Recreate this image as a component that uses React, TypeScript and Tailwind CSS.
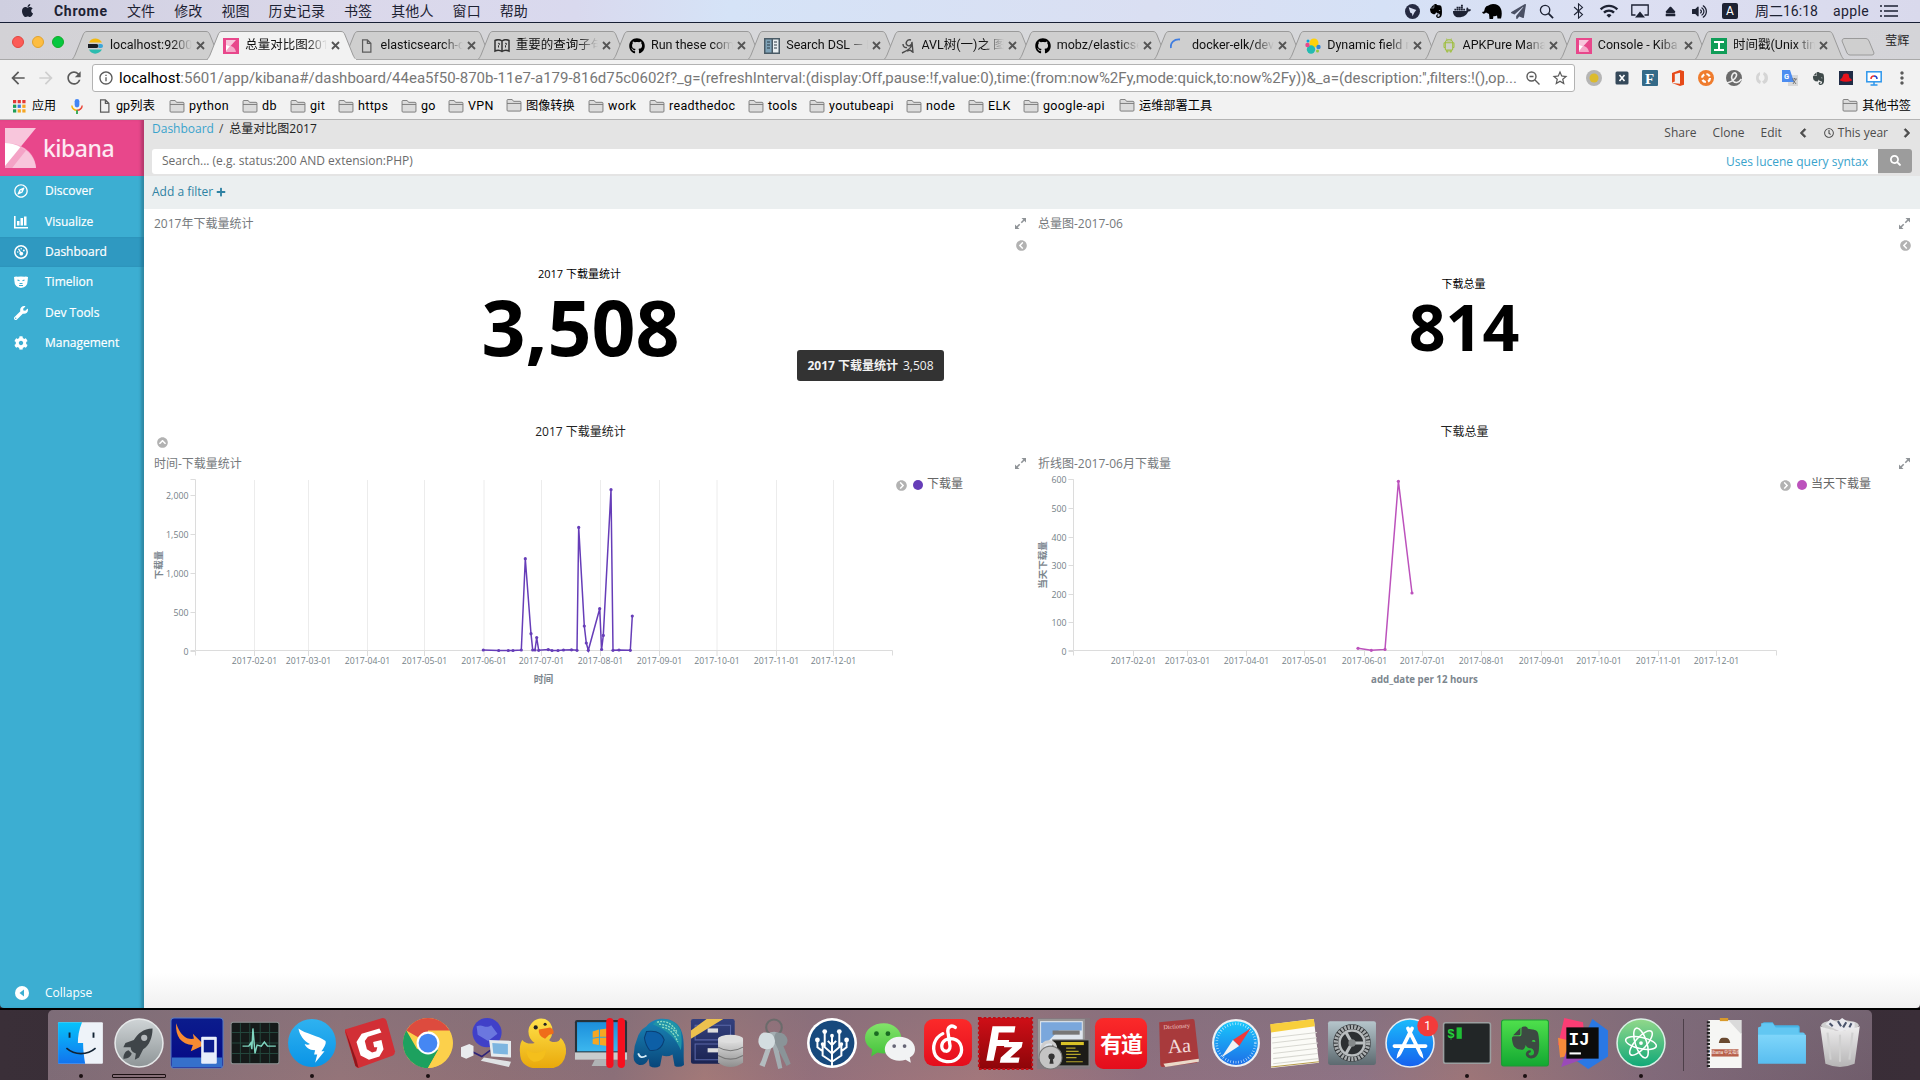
import React from "react";
import { FaApple, FaDocker, FaGithub, FaEvernote, FaPaperPlane, FaWrench, FaCog, FaPlus, FaSearch, FaChevronLeft, FaChevronRight, FaChevronCircleLeft, FaChevronCircleRight, FaChevronCircleUp, FaRegCompass, FaEject, FaVolumeUp, FaRegClock } from "react-icons/fa";
import { AiOutlineAndroid } from "react-icons/ai";
import { MdArrowBack, MdArrowForward, MdRefresh, MdStarBorder, MdInfoOutline, MdMoreVert, MdWifi } from "react-icons/md";

type Kids = { children?: React.ReactNode };

const MENUS = ["文件", "修改", "视图", "历史记录", "书签", "其他人", "窗口", "帮助"];

function MenuCell({ w, children }: Kids & { w: string }) {
  return <span className={`flex shrink-0 items-center justify-center ${w}`}>{children}</span>;
}

function MenuBar() {
  return (
    <div className="flex h-[23px] items-center border-b border-[#171f35] bg-[linear-gradient(90deg,#cfcfe0_0%,#dbd8ea_18%,#d9d9ee_30%,#d5e3f7_38%,#dadff2_60%,#d5e1f6_72%,#dcdff2_85%,#d9d9ec_100%)] font-[Roboto,'Noto_Sans_CJK_SC',sans-serif] text-[14px] leading-none text-[#1d2233]">
      <FaApple className="ml-[20px] -mt-[1px] size-[15px]" />
      <span className="ml-[19px] w-[73px] text-[14px] font-bold tracking-[0.7px]">Chrome</span>
      <div className="flex gap-[19px]">
        {MENUS.map((m) => <span key={m} className="whitespace-nowrap tracking-[0.1px]">{m}</span>)}
      </div>
      <div className="ml-auto flex items-center">
        <MenuCell w="w-[24px]">
          <svg viewBox="0 0 16 16" className="size-[15px]"><circle cx="8" cy="8" r="8" fill="#262b42" /><path d="M4 3.500l8 3-2 2.500-2 4-.5-3-2-1z" fill="#d9e0f3" /></svg>
        </MenuCell>
        <MenuCell w="w-[24px]"><FaEvernote className="size-[16px] text-black" /></MenuCell>
        <MenuCell w="w-[28px]"><FaDocker className="size-[18px]" /></MenuCell>
        <MenuCell w="w-[31px]">
          <svg viewBox="0 0 20 17" className="h-[17px] w-[20px]"><path d="M3 5q1-2.500 3.500-2.500Q8 1 11 1q6 0 8 5 1.500 4 0 9.500h-3.500l-.5-3q-2 1-3.500.5L11 16H7.500L7 11 4 9.500Q3 11 1 10.500L0 9l2-.5z" fill="#000" /></svg>
        </MenuCell>
        <MenuCell w="w-[22px]"><FaPaperPlane className="size-[15px] text-[#4a5064]" /></MenuCell>
        <MenuCell w="w-[34px]"><svg viewBox="0 0 16 16" className="size-[15px]" fill="none" stroke="#1d2233" strokeWidth="1.400"><circle cx="6.500" cy="6.500" r="5" /><path d="M10 10l5 5" strokeWidth="1.900" /></svg></MenuCell>
        <MenuCell w="w-[30px]"><svg viewBox="0 0 12 18" className="h-[16px] w-[11px]" fill="none" stroke="#1d2233" strokeWidth="1.200"><path d="M1 4.500l9.500 8.500L6 17V1l4.500 4L1 13.500" /></svg></MenuCell>
        <MenuCell w="w-[31px]"><MdWifi className="size-[20px]" /></MenuCell>
        <MenuCell w="w-[31px]"><svg viewBox="0 0 18 15" className="h-[15px] w-[18px]" stroke="#1d2233" strokeWidth="1.300"><path d="M4.500 11H.8V1h16.400v10h-3.700" fill="none" /><path d="M9 7.500l5 6H4z" fill="#1d2233" stroke="none" /></svg></MenuCell>
        <MenuCell w="w-[31px]"><FaEject className="size-[11px]" /></MenuCell>
        <MenuCell w="w-[26px]"><FaVolumeUp className="size-[15px]" /></MenuCell>
        <MenuCell w="w-[36px]"><span className="flex h-[16px] w-[16px] items-center justify-center rounded-[2px] bg-[#1d2233] text-[12px] text-white">A</span></MenuCell>
        <span className="ml-[7px] w-[78px] whitespace-nowrap">周二16:18</span>
        <span className="w-[47px] tracking-[0.4px]">apple</span>
        <svg viewBox="0 0 18 14" className="mr-[22px] h-[14px] w-[18px]" stroke="#1d2233" strokeWidth="1.700"><path d="M0 2h2M4 2h14M0 7h2M4 7h14M0 12h2M4 12h14" /></svg>
      </div>
    </div>
  );
}

const KibanaFav = () => (
  <svg viewBox="0 0 16 16" className="size-[16px]"><rect width="16" height="16" fill="#e8478b" /><path d="M3 2h10L3 13z" fill="#f8c6dc" /><path d="M3 7c5 0 9 2 10 7H3z" fill="#f4a9c9" /><path d="M3 7l4 1-4 5z" fill="#fff" /></svg>
);
const DocFav = () => <svg viewBox="0 0 12 16" className="h-[14px] w-[11px]" fill="none" stroke="#5c5c5c" strokeWidth="1.400"><path d="M1.500 1h5.500l4 4v10h-9.500zM7 1v4h4" /></svg>;

const TABS: { title: string; icon: React.ReactNode }[] = [
  { title: "localhost:9200", icon: <svg viewBox="0 0 16 16" className="size-[16px]"><path d="M1 4.500C3-.5 11-1 14 4.500z" fill="#f2b90f" /><path d="M0 6h8.500a2 2 0 010 4H0z" fill="#1b1f24" /><path d="M10.500 6H13a1 1 0 010 4h-2.500z" fill="#3ba6d8" /><path d="M1 11.500C3 17 11 17 14 11.500z" fill="#2bbcaf" /></svg> },
  { title: "总量对比图2017", icon: <KibanaFav /> },
  { title: "elasticsearch-d", icon: <DocFav /> },
  { title: "重要的查询子句", icon: <svg viewBox="0 0 16 14" className="h-[14px] w-[16px]" fill="none" stroke="#333" strokeWidth="1.500"><path d="M8 12.500C6 11 3 11 1 12V1.500c2-1 5-1 7 .5 2-1.500 5-1.500 7-.5V12c-2-1-5-1-7 .5zM8 2v10" /><path d="M4 4.500c2-1 2 1 .5 2v2M11 4.500c2-1 2 1 .5 2v2" strokeWidth="1" /></svg> },
  { title: "Run these com", icon: <FaGithub className="size-[16px] text-black" /> },
  { title: "Search DSL — E", icon: <svg viewBox="0 0 16 16" className="size-[16px]"><rect width="16" height="16" fill="#4a5b66" /><rect x="1.500" y="1.500" width="6" height="13" fill="#7fa3b8" /><rect x="9" y="1.500" width="5.500" height="13" fill="#e8eef0" /><path d="M3 4h3M3 7h3M3 10h3M10 4h3M10 7h3M10 10h3" stroke="#2c3a44" /></svg> },
  { title: "AVL树(一)之 图", icon: <svg viewBox="0 0 16 16" className="size-[16px]" fill="none" stroke="#4b4b4b" strokeWidth="1.400"><path d="M3 6c0 3 2 4 4 3.500M11 2C7 1 5 5 7 7s5 0 5-3c1 4-3 8-10 11M12 4l1 11M7 13q4-2 5 1" /></svg> },
  { title: "mobz/elasticse", icon: <FaGithub className="size-[16px] text-black" /> },
  { title: "docker-elk/dev", icon: <svg viewBox="0 0 16 16" className="size-[16px]" fill="none" stroke="#3f7de0" strokeWidth="1.800"><path d="M1 10C0 5 4 1 10 1.500" /></svg> },
  { title: "Dynamic field m", icon: <svg viewBox="0 0 16 16" className="size-[16px]"><circle cx="9" cy="5" r="4.500" fill="#fed10a" /><circle cx="6" cy="11.500" r="4.200" fill="#24bbb1" /><circle cx="2.500" cy="7" r="2.200" fill="#e8478b" /><circle cx="13.500" cy="9" r="2.200" fill="#3185d6" /><circle cx="3" cy="3" r="1.500" fill="#07a5de" /><circle cx="12.500" cy="13" r="1.500" fill="#93c83e" /></svg> },
  { title: "APKPure Mana", icon: <AiOutlineAndroid className="size-[17px] text-[#9fbf3f]" /> },
  { title: "Console - Kiba", icon: <KibanaFav /> },
  { title: "时间戳(Unix tim", icon: <svg viewBox="0 0 16 16" className="size-[16px]"><rect width="16" height="16" fill="#0f9d58" /><path d="M3 4h10M3 12h10M8 4v8" stroke="#fff" strokeWidth="2" /></svg> },
];

function Tab({ title, icon, active }: { title: string; icon: React.ReactNode; active: boolean }) {
  return (
    <div className={active ? "relative z-10 h-[29px] w-[135.25px] shrink-0" : "relative h-[29px] w-[135.25px] shrink-0"}>
      <svg viewBox="0 0 150 29" className="absolute top-0 left-0 h-[29px] w-[150px]">
        <path d="M0 28.500C1 28 2 26 3 24L11 4C12 1.500 13 .5 15 .5H134C136 .5 137 1.500 138 4L146 24C147 26 148 28 149 28.500" fill={active ? "#f2f2f2" : "#cfcfcf"} stroke="#9a9a9a" />
        {active ? <path d="M1 28.500H149" stroke="#f2f2f2" strokeWidth="1.500" /> : <path d="M0 28.500H150" stroke="#a9a9a9" />}
      </svg>
      <div className="relative flex h-[29px] items-center pl-[16px]">
        <span className="flex w-[16px] justify-center">{icon}</span>
        <span className="ml-[6px] w-[82px] overflow-hidden text-[12.500px] whitespace-nowrap text-[#111] [mask-image:linear-gradient(90deg,#000_75%,transparent_100%)]">{title}</span>
        <svg viewBox="0 0 9 9" className="ml-[4px] size-[9px]" stroke="#555" strokeWidth="1.800"><path d="M1 1l7 7M8 1L1 8" /></svg>
      </div>
    </div>
  );
}

function TabStrip() {
  return (
    <div className="flex h-[37px] items-end bg-[linear-gradient(90deg,#d3d2d6,#d8d9dc_50%,#d4d4d8)] shadow-[inset_0_-1px_0_#a9a9a9]">
      <div className="flex w-[72px] shrink-0 gap-[8px] self-center pl-[12px]">
        <i className="size-[12px] rounded-full border border-[#e2463f] bg-[#fc5b57]" />
        <i className="size-[12px] rounded-full border border-[#e1a32c] bg-[#fdbd41]" />
        <i className="size-[12px] rounded-full border border-[#12ac28] bg-[#05c73f]" />
      </div>
      {TABS.map((t, i) => <Tab key={i} title={t.title} icon={t.icon} active={i === 1} />)}
      <svg viewBox="0 0 34 18" className="mb-[4px] ml-[11px] h-[18px] w-[34px] shrink-0"><path d="M3 .5H25Q27 .5 28 3L33 15Q33 17 31 17H9Q7 17 6 15L1 3Q1 1 3 .5z" fill="#cfcfcf" stroke="#9a9a9a" /></svg>
      <span className="mb-[1px] ml-[10px] self-center text-[12px] whitespace-nowrap text-[#222]">莹辉</span>
    </div>
  );
}

const EXT: React.ReactNode[] = [
  <svg viewBox="0 0 16 16"><circle cx="8" cy="8" r="8" fill="#b5b5b5" /><circle cx="8" cy="8" r="4.500" fill="#dcbb2d" /></svg>,
  <svg viewBox="0 0 16 16"><rect x="1.500" y="1.500" width="13" height="13" rx="1.500" fill="#35495a" /><path d="M5.500 5l5 6M10.500 5l-5 6" stroke="#fff" strokeWidth="1.600" /></svg>,
  <svg viewBox="0 0 16 16"><rect width="16" height="16" rx="1" fill="#346a88" /><text x="3" y="13.500" fontSize="15" fontWeight="700" fontFamily="Liberation Serif, serif" fill="#fff">F</text></svg>,
  <svg viewBox="0 0 16 16"><path d="M2 3l8-3 4 1.200v13.600L10 16l-8-3 8 .8V2.800L4.800 4v7.500L2 12.800z" fill="#e64a19" /></svg>,
  <svg viewBox="0 0 16 16"><circle cx="8" cy="8" r="8" fill="#ef7c2e" /><circle cx="8" cy="8" r="4" fill="none" stroke="#fff" strokeWidth="2.200" strokeDasharray="4 2.280" /></svg>,
  <svg viewBox="0 0 16 16"><circle cx="8" cy="8" r="8" fill="#6b6b6b" /><path d="M1 13C8 11 12 6 10 3.500S4 6 6.500 10s6 3 9-1" fill="none" stroke="#eee" strokeWidth="1.600" /></svg>,
  <svg viewBox="0 0 16 16"><path d="M6 2a6.500 6.500 0 000 12l1-3a3.500 3.500 0 01-1-6zM10 2a6.500 6.500 0 010 12l-2-2.500a4 4 0 001-7z" fill="#d5d5d5" /></svg>,
  <svg viewBox="0 0 16 16"><rect x="6" y="5" width="10" height="11" fill="#d9d9d9" /><path d="M0 0h8l4 12H0z" fill="#4d8df0" /><text x="2" y="8.500" fontSize="7.500" fontWeight="700" fontFamily="Roboto, sans-serif" fill="#fff">G</text><path d="M10 9h5M12.500 8v1M11 14l3-5M11 10l3 4" stroke="#666" strokeWidth=".8" /></svg>,
  <FaEvernote className="size-[15px] text-[#3f4a4a]" />,
  <svg viewBox="0 0 16 16"><rect x="1" y="1" width="14" height="14" fill="#202c46" /><path d="M2 10.500q0-2 2-2.500l1.500-4q3-1 5 0l1 4q2.500.5 2.500 2.500-6 2.500-12 0z" fill="#e8121b" /></svg>,
  <svg viewBox="0 0 16 16"><rect x=".8" y="1.800" width="14.400" height="10" fill="#fff" stroke="#2f97ec" strokeWidth="1.500" /><path d="M8 12v2.500M4.500 15h7" stroke="#2f97ec" strokeWidth="1.500" /><path d="M5 9a3 3 0 013-3" stroke="#e33" strokeWidth="1.500" fill="none" /><path d="M8 6a3 3 0 013 3" stroke="#24c" strokeWidth="1.500" fill="none" /></svg>,
  <MdMoreVert className="size-[20px] text-[#5a5a5a]" />,
];

function Toolbar() {
  return (
    <div className="flex h-[36px] items-center bg-[#f2f2f2] text-[#5a5a5a]">
      <MdArrowBack className="ml-[8px] size-[20px]" />
      <MdArrowForward className="ml-[8px] size-[20px] text-[#cfcfcf]" />
      <MdRefresh className="mr-[8px] ml-[8px] size-[20px]" />
      <div className="flex h-[28px] w-[1483px] shrink-0 items-center rounded-[3px] border border-[#b3b3b3] bg-white pl-[5px]">
        <MdInfoOutline className="size-[16px]" />
        <span className="ml-[5px] w-[1407px] text-[15px] whitespace-nowrap text-[#777]"><span className="text-black">localhost</span>:5601/app/kibana#/dashboard/44ea5f50-870b-11e7-a179-816d75c0602f?_g=(refreshInterval:(display:Off,pause:!f,value:0),time:(from:now%2Fy,mode:quick,to:now%2Fy))&amp;_a=(description:'',filters:!(),op...</span>
        <svg viewBox="0 0 14 14" className="size-[14px]" fill="none" stroke="#5a5a5a" strokeWidth="1.400"><circle cx="5.500" cy="5.500" r="4.500" /><path d="M3.500 5.500h4M9 9l4.500 4.500" /></svg>
        <MdStarBorder className="ml-[11px] size-[18px]" />
      </div>
      <div className="ml-[5px] flex">
        {EXT.map((e, i) => <span key={i} className="flex w-[28px] items-center justify-center [&>svg:not([stroke])]:size-[16px]">{e}</span>)}
      </div>
    </div>
  );
}

const Folder = () => (
  <svg viewBox="0 0 16 14" className="h-[13px] w-[16px] shrink-0" stroke="#787878"><path d="M.5 12V1.500q0-1 1-1h4.500l1.500 2h7q1 0 1 1V12q0 1-1 1h-13q-1 0-1-1z" fill="#dcdcdc" /><path d="M.5 4.800h15" /></svg>
);

const MARKS: [string, string][] = [
  ["python", "w-[73px]"], ["db", "w-[48px]"], ["git", "w-[48px]"], ["https", "w-[63px]"], ["go", "w-[47px]"], ["VPN", "w-[58px]"], ["图像转换", "w-[82px]"], ["work", "w-[61px]"], ["readthedoc", "w-[99px]"], ["tools", "w-[61px]"], ["youtubeapi", "w-[97px]"], ["node", "w-[62px]"], ["ELK", "w-[55px]"], ["google-api", "w-[96px]"], ["运维部署工具", "w-[96px]"],
];

function Bookmarks() {
  const colors = ["#e53935", "#e53935", "#e53935", "#1e9e57", "#3b7de0", "#f6a623", "#1e9e57", "#f6a623", "#f6a623"];
  return (
    <div className="flex h-[24px] items-center border-b border-[#b4b4b4] bg-[#f2f2f2] pb-[3px] text-[12.500px] text-black">
      <svg viewBox="0 0 14 14" className="ml-[13px] size-[13px]">{colors.map((c, i) => <rect key={i} x={(i % 3) * 5} y={Math.floor(i / 3) * 5} width="3.500" height="3.500" fill={c} />)}</svg>
      <span className="ml-[6px] w-[38px] text-[12px] whitespace-nowrap">应用</span>
      <svg viewBox="0 0 14 16" className="h-[15px] w-[14px]"><rect x="4.500" y="0" width="5" height="9" rx="2.500" fill="#4285f4" /><path d="M1.500 7a5.500 5 0 005.500 5" fill="none" stroke="#f4b400" strokeWidth="1.500" /><path d="M12.500 7a5.500 5 0 01-5.500 5" fill="none" stroke="#ea4335" strokeWidth="1.500" /><path d="M7 12v4" stroke="#34a853" strokeWidth="2" /></svg>
      <span className="ml-[15px] flex w-[70px] items-center gap-[6px] whitespace-nowrap"><DocFav />gp列表</span>
      {MARKS.map(([t, w]) => <span key={t} className={`flex shrink-0 items-center gap-[4px] whitespace-nowrap ${t.charCodeAt(0) < 128 ? "tracking-[0.35px]" : "text-[12.200px]"} ${w}`}><Folder />{t}</span>)}
      <span className="mr-[9px] ml-auto flex items-center gap-[4px] text-[12.200px] whitespace-nowrap"><Folder />其他书签</span>
    </div>
  );
}

const NAV: { label: string; icon: React.ReactNode }[] = [
  { label: "Discover", icon: <FaRegCompass className="size-[14px]" /> },
  { label: "Visualize", icon: <svg viewBox="0 0 14 14" className="size-[14px]" fill="#fff"><path d="M0 1h1.600v11H14v1.500H0zM3 6h2.500v4.500H3zM6.500 3H9v7.500H6.500zM10 1.500h2.500v9H10z" /></svg> },
  { label: "Dashboard", icon: <svg viewBox="0 0 14 14" className="size-[14px]" fill="none" stroke="#fff"><circle cx="7" cy="7" r="6.200" strokeWidth="1.500" /><path d="M4.500 3.800L7.500 9" strokeWidth="1.300" /><circle cx="7.300" cy="8.600" r="1.900" fill="#fff" stroke="none" /><circle cx="3.800" cy="7" r=".8" fill="#fff" stroke="none" /><circle cx="7.200" cy="3.800" r=".8" fill="#fff" stroke="none" /><circle cx="9.800" cy="5.500" r="1" fill="#fff" stroke="none" /></svg> },
  { label: "Timelion", icon: <svg viewBox="0 0 14 12" className="h-[12px] w-[14px]"><path d="M0 1q2-1 3.500-.2 3.500-.8 7 0Q12 0 14 1l-.4 4q0 6-6.600 7Q.4 11 .4 5z" fill="#fff" /><path d="M3.500 4l2 .8M10.500 4l-2 .8M5.500 7.500h3M5 9.500h4" stroke="#3caed2" strokeWidth="1.100" /></svg> },
  { label: "Dev Tools", icon: <FaWrench className="size-[14px]" /> },
  { label: "Management", icon: <FaCog className="size-[14px]" /> },
];

function Sidebar() {
  return (
    <div className="flex w-[144px] shrink-0 flex-col rounded-bl-[4px] bg-[#3caed2] text-[12px] text-white shadow-[inset_-4px_0_3px_-1px_rgba(0,0,0,.22)]">
      <div className="flex h-[56px] items-center bg-[#e8478b] pl-[5px] shadow-[inset_-4px_0_3px_-1px_rgba(0,0,0,.22)]">
        <svg viewBox="0 0 31 40" className="h-[40px] w-[31px]"><path d="M0 0h31L0 38z" fill="#f8c6dc" /><path d="M0 15c18 0 30 10 31 25H0z" fill="#f4a3c6" /><path d="M15.500 19C25 23 30 31 31 40H7L19 22z" fill="#f8c6dc" /><path d="M7 40L21 22.500 15 19 0 36v4z" fill="#f4a3c6" /><path d="M0 15q8 0 15.500 4L0 38z" fill="#fff" /></svg>
        <span className="mt-[-1px] ml-[7px] font-['Noto_Sans',sans-serif] text-[23px] leading-[40px] font-medium tracking-[-0.5px] text-[#fde9f2]">kibana</span>
      </div>
      {NAV.map((n) => (
        <div key={n.label} className={`flex h-[30.400px] items-center pl-[14px] ${n.label === "Dashboard" ? "bg-[#2f99c1] shadow-[inset_-4px_0_3px_-1px_rgba(0,0,0,.18)]" : ""}`}>
          <span className="w-[31px]">{n.icon}</span><span className="font-medium [-webkit-text-stroke:0.2px_#fff]">{n.label}</span>
        </div>
      ))}
      <div className="mt-auto flex h-[30px] items-center pl-[15px]">
        <svg viewBox="0 0 14 14" className="size-[14px]"><circle cx="7" cy="7" r="7" fill="#fff" /><path d="M9 3.500v7L4.500 7z" fill="#3caed2" /></svg>
        <span className="ml-[16px] font-medium">Collapse</span>
      </div>
    </div>
  );
}

function Panel({ title, className, children }: Kids & { title: string; className: string }) {
  return (
    <div className={`relative w-[884px] shrink-0 ${className}`}>
      <div className="flex h-[29px] items-center pr-[2px] pl-[10px]">
        <span className="text-[12px] text-[#75797c]">{title}</span>
        <svg viewBox="0 0 11 11" className="ml-auto size-[11px]" fill="#8f9397" stroke="#8f9397"><path d="M6.500 0H11v4.500zM0 6.500V11h4.500z" stroke="none" /><path d="M9 2L6.300 4.700M4.700 6.300L2 9" strokeWidth="1.600" /></svg>
      </div>
      {children}
    </div>
  );
}

function Metric({ label, value, big }: { label: string; value: string; big: boolean }) {
  return (
    <>
      <div className="flex h-[14px] items-center justify-end pr-[1px]"><FaChevronCircleLeft className="size-[11px] text-[#b2b2b2]" /></div>
      <div className="flex h-[171px] flex-col items-center pr-[13px] text-black">
        <span className={big ? "mt-[14px] text-[11px] leading-[16px]" : "mt-[24px] text-[11px] leading-[16px]"}>{label}</span>
        <span className={big ? "mt-[5px] pl-[2px] text-[77px] leading-[80px] font-bold" : "mt-[2px] pl-[1px] text-[64.500px] leading-[64px] font-bold"}>{value}</span>
      </div>
      <div className="pr-[11px] text-center text-[12px] leading-[18px] text-[#222]">{label}</div>
    </>
  );
}

const MONTHS = ["02", "03", "04", "05", "06", "07", "08", "09", "10", "11", "12"];

type ChartProps = {
  view: string; x0: number; x1: number; months: number[]; ticks: [string, number][]; grid: boolean;
  color: string; points: [number, number][]; yTitle: string; yTitleX: number; xTitle: string;
};

function LineChart(p: ChartProps) {
  const mid = (p.x0 + p.x1) / 2;
  return (
    <svg viewBox={p.view} className="h-[220px] w-[752px] shrink-0 overflow-visible" fontFamily="'Open Sans','Noto Sans CJK SC',sans-serif">
      {p.grid && p.months.map((x) => <path key={x} d={`M${x} 480V650`} stroke="#ececec" />)}
      <path d={`M${p.x0 - 5} 479.500H${p.x0}V650.500H${p.x1}V655.500M${p.x0 - 5} 650.500H${p.x0}V655.500`} fill="none" stroke="#dcdcdc" />
      {p.months.map((x) => <path key={x} d={`M${x} 651v5`} stroke="#dcdcdc" />)}
      {p.ticks.map(([t, y]) => (
        <g key={t}>
          <path d={`M${p.x0 - 5} ${y}H${p.x0}`} stroke="#dcdcdc" />
          <text x={p.x0 - 7} y={y + 3} textAnchor="end" fontSize="8.800" fill="#757f87">{t}</text>
        </g>
      ))}
      {p.months.map((x, i) => <text key={x} x={x} y="664" textAnchor="middle" fontSize="8.700" fill="#757f87">{`2017-${MONTHS[i]}-01`}</text>)}
      <text x={mid - 0.5} y="683" textAnchor="middle" fontSize="9.700" fontWeight="700" fill="#7c868e">{p.xTitle}</text>
      <text transform={`translate(${p.yTitleX} 565) rotate(-90)`} textAnchor="middle" fontSize="9.500" fontWeight="700" fill="#7c868e">{p.yTitle}</text>
      <polyline points={p.points.map((q) => q.join(",")).join(" ")} fill="none" stroke={p.color} strokeWidth="1.500" />
      {p.points.map((q, i) => <circle key={i} cx={q[0]} cy={q[1]} r="1.600" fill={p.color} />)}
    </svg>
  );
}

const P1: [number, number][] = [[483.3, 650], [498.7, 650.5], [508.3, 650.5], [513, 650.5], [521.3, 650], [525.3, 558.7], [531, 633.7], [532.7, 650], [535, 650], [536.7, 637.5], [538.7, 650.3], [548.3, 649.6], [552, 650.5], [558, 650.5], [563.5, 650], [571.5, 649.8], [577, 650.3], [578.7, 527.4], [584.3, 626], [586.3, 643], [588.3, 650.3], [599.7, 608.7], [601.6, 649.5], [603.3, 635.4], [611, 489.7], [613, 650.3], [619, 650], [630.3, 650.3], [632.3, 616]];
const P2: [number, number][] = [[1358, 648.3], [1371.3, 650.3], [1385, 649.4], [1398.4, 481.3], [1412, 593]];

function Legend({ color, label }: { color: string; label: string }) {
  return (
    <div className="flex h-[14px] items-center pt-[1px] text-[12px] text-[#666]">
      <FaChevronCircleRight className="size-[11px] text-[#b2b2b2]" />
      <svg viewBox="0 0 10 10" className="mt-[-1px] ml-[6px] size-[10px]"><circle cx="5" cy="5" r="5" fill={color} /></svg>
      <span className="-mt-[4px] ml-[4px] whitespace-nowrap">{label}</span>
    </div>
  );
}

function Kibana() {
  return (
    <div className="flex h-[888px] font-['Open_Sans','Noto_Sans_CJK_SC',sans-serif]">
      <Sidebar />
      <div className="flex min-w-0 flex-1 flex-col rounded-br-[4px] bg-[linear-gradient(180deg,#fff_0%,#fff_96%,#f0f0f0_100%)]">
        <div className="flex h-[56px] flex-col bg-[#e4e4e4] px-[8px] text-[12px]">
          <div className="flex h-[29px] justify-between">
            <div className="flex h-[18px] items-center gap-[5px]"><span className="text-[#39a3cc]">Dashboard</span><span className="text-[#444]">/</span><span className="ml-[1px] text-[#222]">总量对比图2017</span></div>
            <div className="flex h-[25px] items-center text-[#4c4c4c]">
              <span className="mr-[16px]">Share</span><span className="mr-[16px]">Clone</span><span className="mr-[16px]">Edit</span>
              <FaChevronLeft className="mr-[16px] size-[10px]" stroke="#4c4c4c" strokeWidth="45" /><FaRegClock className="mr-[4px] size-[10px]" /><span className="mr-[14px]">This year</span><FaChevronRight className="size-[10px]" stroke="#4c4c4c" strokeWidth="45" />
            </div>
          </div>
          <div className="flex h-[25px]">
            <div className="flex flex-1 items-center justify-between rounded-l-[3px] bg-white pr-[10px] pl-[10px]"><span className="pb-[1px] text-[#6b6b6b]">Search... (e.g. status:200 AND extension:PHP)</span><span className="text-[#39a3cc]">Uses lucene query syntax</span></div>
            <div className="flex h-[24px] w-[34px] items-center justify-center rounded-r-[3px] bg-[#9c9c9c] pb-[1px] text-white"><FaSearch className="size-[11px]" /></div>
          </div>
        </div>
        <div className="flex h-[33px] items-center gap-[3px] bg-[#ebeff0] pb-[2px] pl-[8px] text-[12px] text-[#2f82a3]">Add a filter<FaPlus className="size-[10px]" /></div>
        <div className="flex">
          <Panel title="2017年下载量统计" className="h-[240px]">
            <Metric label="2017 下载量统计" value="3,508" big />
            <div className="absolute top-[141px] left-[653px] flex h-[31px] w-[147px] items-center justify-center gap-[5px] rounded-[3px] bg-[#333] text-[12px] whitespace-nowrap text-[#f2f2f2]"><b>2017 下载量统计</b><span>3,508</span></div>
            <FaChevronCircleUp className="absolute top-[228px] left-[13px] size-[11px] text-[#b2b2b2]" />
          </Panel>
          <Panel title="总量图-2017-06" className="h-[240px]"><Metric label="下载总量" value="814" big={false} /></Panel>
        </div>
        <div className="flex">
          <Panel title="时间-下载量统计" className="h-[260px]">
            <div className="flex">
              <LineChart view="144 478 752 220" x0={195.5} x1={892.5} grid months={[254.5, 308.5, 367.5, 424.5, 484, 541.5, 600.5, 659.5, 717, 776.5, 833.5]}
                ticks={[["2,000", 495.5], ["1,500", 534.5], ["1,000", 573.5], ["500", 612.5], ["0", 651.5]]} color="#663db8" points={P1} yTitle="下载量" yTitleX={161.5} xTitle="时间" />
              <Legend color="#663db8" label="下载量" />
            </div>
          </Panel>
          <Panel title="折线图-2017-06月下载量" className="h-[260px]">
            <div className="flex">
              <LineChart view="1028 478 752 220" x0={1073.5} x1={1776.5} grid={false} months={[1133.5, 1187.5, 1246.5, 1304.5, 1364.5, 1422.5, 1481.5, 1541.5, 1599, 1658.5, 1716.5]}
                ticks={[["600", 479.5], ["500", 508.5], ["400", 537.5], ["300", 565.5], ["200", 594.5], ["100", 622.5], ["0", 651.5]]} color="#bc52bc" points={P2} yTitle="当天下载量" yTitleX={1045.5} xTitle="add_date per 12 hours" />
              <Legend color="#bc52bc" label="当天下载量" />
            </div>
          </Panel>
        </div>
      </div>
    </div>
  );
}

const S = ({ children }: Kids) => <svg viewBox="0 0 48 48" className="size-[50px] overflow-visible">{children}</svg>;

function Defs() {
  const g = (id: string, a: string, b: string) => <linearGradient key={id} id={id} x1="0" y1="0" x2="0" y2="1"><stop stopColor={a} /><stop offset="1" stopColor={b} /></linearGradient>;
  return (
    <svg className="absolute size-0"><defs>
      {[g("fin", "#06c4fb", "#1273ee"), g("sil", "#cfd4d6", "#8e9597"), g("navy", "#0b1c8d", "#050a86"), g("ding", "#2fb2f0", "#0a94e6"), g("duck", "#ffe14a", "#e9a90b"), g("win", "#1c8fdc", "#3cb7ee"), g("ele", "#1b86b8", "#08467a"), g("cab", "#33407e", "#1b2452"), g("db", "#e4e4e4", "#8f8f8f"), g("wc", "#83e36a", "#43c23b"), g("red", "#fb2a2a", "#e40d1c"), g("fz", "#cf0f17", "#8d0509"), g("saf", "#19c8fb", "#1d6fe8"), g("app", "#1bbcfb", "#1560ee"), g("ev", "#4fe04c", "#13a832"), g("atom", "#92d88a", "#0fa878"), g("fold", "#7fd6fa", "#58bdf0"), g("trash", "#f4f4f4", "#b9b9b9"), g("set", "#b6c6cc", "#5d6a70")]}
    </defs></svg>
  );
}

const DOCK: React.ReactNode[] = [
  <S><rect x="2" y="4" width="43" height="40" rx="1" fill="#eef3f9" /><path d="M2 4h23c-3 7-4 14-4 20h5c0 7 1 14 2 20H2z" fill="url(#fin)" /><path d="M13 14v5M36 14v5" stroke="#123" strokeWidth="1.800" /><path d="M10 29c8 7 20 7 28 0" fill="none" stroke="#123" strokeWidth="1.600" /></S>,
  <S><circle cx="24" cy="24" r="23" fill="url(#sil)" stroke="#e5e8e9" strokeWidth="1.500" /><path d="M37 10c-9 0-14 5-18 11l-8 3-2 4 7 0c0 3 2 5 5 6l-1 6 4-2 4-8c6-4 9-11 9-20z" fill="#3f4549" /><circle cx="29" cy="19" r="3" fill="#b5babd" /><path d="M14 31c-4 1-5 5-5 8 3 0 7-1 8-5z" fill="#3f4549" /></S>,
  <S><rect x="-1" y="0" width="50" height="48" rx="3" fill="url(#navy)" stroke="#5a7cc4" /><path d="M0 38h48v9H0z" fill="#4a9be8" opacity=".7" /><path d="M4 5c4 12 10 16 17 15l-1-5 11 11-13 6 2-6C9 25 3 18 4 5z" fill="#f78b32" /><rect x="28" y="18" width="15" height="26" rx="1" fill="#e8eefb" /><rect x="30.500" y="21" width="10" height="12" fill="#0b1c8d" /></S>,
  <S><rect x="1" y="4" width="46" height="40" rx="2" fill="#151a19" stroke="#8d9292" /><path d="M10 5v38M19 5v38M29 5v38M38 5v38M2 14h44M2 24h44M2 34h44" stroke="#23463c" /><path d="M12 27h6l2-3 1 6 1-20 2 24 2-8 4 1 3-4 3 4h8" fill="none" stroke="#7fd6c0" strokeWidth="1.400" /></S>,
  <S><circle cx="24" cy="24" r="23" fill="url(#ding)" /><path d="M11 10c6 5 20 7 26 12 1 3-2 7-4 10h3l-9 11 2-8h-3l1-4c-6 0-9-3-10-6 2 1 4 1 5 0-6-3-10-9-11-15z" fill="#fff" /></S>,
  <S><path d="M0 11L36 0q3 0 4 3l8 29q0 3-2 4L13 48q-2 0-3-2L0 14z" fill="#d22f36" /><path d="M0 11l10 35 3 2-2-8z" fill="#8f171c" /><path d="M33 10l-17 5-5 8 4 13 8 4 10-3 4-7-2-9-8 2 1 5 3 0-1 4-4 1-5-3-2-8 3-4 13-4z" fill="#fff" /></S>,
  <S><circle cx="24" cy="24" r="24" fill="#fcd04b" /><path d="M24 24L3.200 12A24 24 0 0144.800 12H24z" fill="#dd4b3e" /><path d="M3.200 12A24 24 0 0024 48l10.400-18L24 24 13.600 30z" fill="#1da15f" /><path d="M24 13h20.800A24 24 0 0124 48l9.500-17z" fill="#fcd04b" /><circle cx="24" cy="24" r="11" fill="#fff" /><circle cx="24" cy="24" r="9" fill="#4587f3" /></S>,
  <S><circle cx="25" cy="14" r="14" fill="#4040c8" /><path d="M15 8c6-3 8 3 14-1l6 8-9 7-10-6z" fill="#7d8fe8" opacity=".7" /><path d="M6 30l14 7 8-6" fill="none" stroke="#2e2378" strokeWidth="1.600" /><path d="M0 28l8-3 4 2v9l-7 3-5-2z" fill="#e9ebee" /><path d="M27 21l21 1v16l-19-1z" fill="#e5ebee" /><path d="M30 24l15 1v10l-14-1z" fill="#7db5e0" /><path d="M22 38l26 4-2 5-27-6z" fill="#dfe2e4" /></S>,
  <S><path d="M14 4Q19-1 26 1q7 3 7 11 0 6-3 9 1 2 5 2 5 0 6-4 6 6 5 15-2 12-12 14H14Q2 45 2 34q-1-8 2-13 5 5 12 3-6-4-6-11 0-5 4-9z" fill="url(#duck)" /><path d="M20 11l11-2q4 2 3 6l-4 1-4 4q-7-3-6-9z" fill="#ef6c1a" /><circle cx="17" cy="9" r="2" fill="#222" /><circle cx="26" cy="6" r="1.500" fill="#222" /><path d="M8 30q8 7 19 0-1 12-12 12-7-3-7-12z" fill="#f4bf1c" /></S>,
  <S><rect x="-1" y="2" width="50" height="36" rx="2" fill="#27323a" /><rect x="1" y="4" width="46" height="28" fill="url(#win)" /><path d="M16 13l6-2v7l-6 1zM23 11l7-1v8h-7zM16 20l6-1v7l-6-1zM23 19h7v8l-7-1z" fill="#f5a623" /><rect x="-1" y="33" width="50" height="7" fill="#c9cccd" /><path d="M18 40h12l3 6H15z" fill="#b0b3b5" /><rect x="29" y="0" width="7" height="48" rx="3.500" fill="#f5101f" /><rect x="40" y="0" width="7" height="48" rx="3.500" fill="#f5101f" /></S>,
  <S><path d="M12 8C20-3 42-2 46 14c3 9 1 20 2 31q-4 3-9 1l-2-11q-5 3-10 1l-2 10q-5 3-10 0l-1-7q-3 7-9 6-7-2-5-12 0-6 3-13 2-8 9-12z" fill="url(#ele)" /><path d="M18 6C26-2 41 1 45 13c1 8 1 11 0 18-4-10-12-19-27-25z" fill="#1f93a8" /><path d="M22 4q12-3 19 9M27 9q9 0 15 14M24 6q12 0 19 12" fill="none" stroke="#8fdcc4" strokeWidth="1.300" strokeDasharray="2 1" /><path d="M12 13q14-2 17 8-3 12-14 10-4-5-5-12z" fill="#0d5fa6" stroke="#0a3f74" /><path d="M4 34q2 6 8 2" fill="none" stroke="#d8eef8" strokeWidth="1.800" /></S>,
  <S><rect x="-1" y="1" width="42" height="43" rx="2" fill="url(#cab)" /><path d="M3 7h34v14H3zM3 25h34v15H3z" fill="none" stroke="#5a67a8" /><path d="M-1 12L14 1h16L-1 20z" fill="#ecc14e" /><rect x="15" y="10" width="10" height="4" fill="#ddd" /><rect x="15" y="29" width="10" height="4" fill="#ddd" /><path d="M25 20v23q12 8 24 0V20z" fill="url(#db)" /><ellipse cx="37" cy="20" rx="12" ry="4" fill="#dedede" /><path d="M25 28q12 7 24 0M25 36q12 7 24 0" fill="none" stroke="#777" /></S>,
  <S><circle cx="24" cy="9" r="7.500" fill="none" stroke="#6b6b6b" strokeWidth="2" /><path d="M20 14q9-3 12 6 0 6-4 8l4 20-4 1-5-20q-6-8-3-15z" fill="#a3adb1" /><path d="M26 14q9-1 11 7 0 5-4 6l7 17-4 2-9-18q-5-8-1-14z" fill="#8a9498" /><path d="M22 27L15 47l-5-2 2-4 5-14z" fill="#b3bcbf" /><path d="M14 14q10-1 11 8 0 7-7 8-8 0-9-7 0-7 5-9z" fill="#d3dde0" /></S>,
  <S><circle cx="24" cy="24" r="24" fill="#fff" /><circle cx="24" cy="24" r="21.500" fill="#17497d" /><g fill="none" stroke="#fff" strokeWidth="1.900"><path d="M24 18v28M24 42l-9-6V26M24 34l-7-6V14M24 42l9-6V26M24 34l7-6V14M15 32l-5-4v-6M33 32l5-4v-6M24 26l-4-4M24 26l4-4" /></g><g fill="#fff"><circle cx="24" cy="17" r="1.800" /><circle cx="17" cy="13" r="2.300" /><circle cx="31" cy="13" r="2.300" /><circle cx="10" cy="21" r="2.300" /><circle cx="38" cy="21" r="2.300" /><circle cx="15" cy="25" r="1.800" /><circle cx="33" cy="25" r="1.800" /></g></S>,
  <S><path d="M18 5c10 0 17 7 17 15s-7 14-17 14q-3 0-6-1l-6 4 1-7C3 28 0 24 0 19 0 11 8 5 18 5z" fill="url(#wc)" /><circle cx="11" cy="15" r="2.300" fill="#1a6a22" /><circle cx="22" cy="15" r="2.300" fill="#1a6a22" /><path d="M33 18c8 0 15 5 15 12 0 4-2 6-5 8l1 5-5-3q-3 1-6 1c-8 0-14-5-14-11s6-12 14-12z" fill="#f1f3f4" /><circle cx="28" cy="27" r="1.800" fill="#667" /><circle cx="38" cy="27" r="1.800" fill="#667" /></S>,
  <S><rect x="1" y="1" width="46" height="45" rx="9" fill="url(#red)" /><path d="M31 9c-4-3-8 0-7 5l2 13c0 7-8 6-8 0 0-5 5-8 11-7 9 2 10 13 5 18-6 6-17 5-22-2-4-8-1-17 7-21" fill="none" stroke="#fff" strokeWidth="3.200" strokeLinecap="round" /></S>,
  <S><rect x="-1" y="0" width="51" height="49" fill="url(#fz)" stroke="#c20d15" strokeWidth="2" strokeDasharray="2.500 2" /><path d="M12 8h22l-1 6H18l-1 7h11l-1 6H16l-3 14H6z" fill="#fff" /><path d="M24 23h17l-1 5-11 10h9l-1 5H19l1-5 11-10h-8z" fill="#fff" /></S>,
  <S><rect x="-1" y="0" width="51" height="49" fill="#85787f" /><rect x="1" y="2" width="43" height="36" fill="#dfe6ee" stroke="#999" strokeWidth="2" /><path d="M3 4h39v8H20L8 24H3z" fill="#7aa7dc" /><rect x="14" y="12" width="26" height="4" fill="#777" /><rect x="14" y="21" width="35" height="25" fill="#1c1c18" stroke="#888" /><rect x="22" y="23" width="22" height="3" fill="#d8c227" /><path d="M27 29h9M27 32h12M27 35h14M27 38h10M27 42h16" stroke="#b5a42a" strokeWidth="1.200" /><path d="M4 34v-5q1-7 8-6 5 1 5 7" fill="none" stroke="#cfcfcf" strokeWidth="3" /><circle cx="12" cy="38" r="11" fill="#c4c4c4" stroke="#777" /><circle cx="13" cy="37" r="3" fill="#333" /><path d="M12 38h2l1 6h-4z" fill="#333" /></S>,
  <S><rect x="-1" y="0" width="50" height="49" rx="8" fill="url(#red)" /><text x="24" y="33" textAnchor="middle" fontSize="21" fontWeight="700" fontFamily="Noto Sans CJK SC, sans-serif" fill="#fff" letterSpacing="-1">有道</text></S>,
  <S><path d="M5 4l32-3q2 0 2 2l4 36-2 4-33 4q-2 0-2-3z" fill="#a83a3c" /><path d="M9 44l34-5v3L11 47z" fill="#ead9c9" /><text x="24" y="33" textAnchor="middle" fontSize="19" fontFamily="Liberation Serif, serif" fill="#f3dcdc" transform="rotate(-4 24 24)">Aa</text><text x="22" y="10" textAnchor="middle" fontSize="6" fontFamily="Liberation Serif, serif" fill="#f0c8c8" transform="rotate(-4 22 10)">Dictionary</text></S>,
  <S><circle cx="24" cy="24" r="23" fill="#eef1f3" /><circle cx="24" cy="24" r="21" fill="url(#saf)" /><circle cx="24" cy="24" r="18.500" fill="none" stroke="#d9f1ff" strokeWidth="2.500" strokeDasharray=".6 2" /><path d="M38 10L27 27l-6-6z" fill="#ef3a3a" /><path d="M10 38l11-17 6 6z" fill="#f2f2f2" /></S>,
  <S><path d="M2 6l41-5 5 42-46 5z" fill="#fbfbf7" /><path d="M1 6l42-5 1 7L2 14z" fill="#f8cf3c" /><path d="M3 19l43-5M3 24l43-5M4 29l43-5M4 34l43-5M4 39l43-5M4 44l43-5" stroke="#d8d8d2" /><path d="M2 47l46-5" stroke="#b79b4a" /></S>,
  <S><rect x="1" y="3" width="46" height="42" rx="2" fill="url(#set)" /><circle cx="24" cy="24" r="18" fill="#2d3033" /><circle cx="24" cy="24" r="15.500" fill="none" stroke="#a9adaf" strokeWidth="4" strokeDasharray="2.200 1.050" /><circle cx="24" cy="24" r="12" fill="none" stroke="#b9bdbf" strokeWidth="2.500" /><path d="M24 24h12M24 24l-6-10.500M24 24l-6 10.500" stroke="#b9bdbf" strokeWidth="3" /><circle cx="24" cy="24" r="3.500" fill="#85898b" /></S>,
  <S><circle cx="24" cy="24" r="23" fill="url(#app)" stroke="#e6ecf2" strokeWidth="1.500" /><path d="M22 10l12 24M26 10L14 34M9 27h30" stroke="#fff" strokeWidth="3.500" strokeLinecap="round" /><path d="M12 34l-1 5 4-3zM36 34l1 5-4-3z" fill="#fff" /><circle cx="41" cy="7.500" r="10" fill="#f23b3b" /><text x="41" y="11.500" textAnchor="middle" fontSize="11.500" fontFamily="Roboto, sans-serif" fill="#fff">1</text></S>,
  <S><rect x="1.500" y="4.500" width="45" height="39" rx="2" fill="#222627" stroke="#9b9fa0" strokeWidth="1.500" /><text x="5" y="19" fontSize="12" fontWeight="700" fontFamily="Liberation Mono, monospace" fill="#22d43a">$</text><rect x="14" y="9" width="5" height="11" fill="#1fbf35" /></S>,
  <S><rect x="1.500" y="2" width="45" height="44" rx="2" fill="url(#ev)" stroke="#1c9934" /><g transform="translate(7 6)"><FaEvernote size={35} color="#3c4a42" /></g></S>,
  <S><path d="M6 0l18 4 2 20-26 2z" fill="#fb3d74" /><path d="M33 1l15 11v25L29 49 15 39z" fill="#2a78e4" /><path d="M0 19l12 3v14L2 38z" fill="#f58a3a" /><path d="M8 32L3 47l22-8z" fill="#9a4ab8" /><rect x="8" y="9" width="31" height="30" fill="#0c0c0c" /><text x="10" y="26" fontSize="17" fontWeight="700" fontFamily="Liberation Mono, monospace" fill="#fff">IJ</text><path d="M11 34h11" stroke="#fff" strokeWidth="2" /></S>,
  <S><circle cx="24" cy="24" r="23" fill="url(#atom)" stroke="#d9efe4" strokeWidth="1.500" /><g fill="none" stroke="#fff" strokeWidth="1.500"><ellipse cx="24" cy="24" rx="15" ry="5.500" transform="rotate(12 24 24)" /><ellipse cx="24" cy="24" rx="15" ry="5.500" transform="rotate(72 24 24)" /><ellipse cx="24" cy="24" rx="15" ry="5.500" transform="rotate(132 24 24)" /></g><circle cx="24" cy="24" r="1.800" fill="#fff" /></S>,
];
const DOCK_END: React.ReactNode[] = [
  <S><path d="M9 2h23l9 13v33H9z" fill="#f6f6f4" /><path d="M28 2h13v14z" fill="#dadada" /><path d="M9 3v45" stroke="#222" strokeWidth="3" strokeDasharray="2 1.500" /><rect x="20" y="0" width="8" height="3" fill="#d99a2b" /><path d="M19 24q1-6 5-5 5-1 6 5z" fill="#6a4a30" /><rect x="12" y="30" width="26" height="7" fill="#b8604a" /><text x="25" y="35" textAnchor="middle" fontSize="4" fontFamily="Noto Sans CJK SC, sans-serif" fill="#fff">Kibana 中文指南</text></S>,
  <S><path d="M5 6q0-2 2-2h8l2 3h22q2 0 2 2v8H5z" fill="#46b4e6" /><path d="M1 9l3-1V5h11l3 4h22v5h4q2 0 2 2v27H1z" fill="#62c7f2" /><path d="M1 16h46v28H1z" fill="url(#fold)" /></S>,
  <S><ellipse cx="24" cy="7" rx="18" ry="5" fill="#cfcfcf" /><path d="M10 6l5-5 6 3 5-4 6 4 6 0 0 6-14 3z" fill="#e9e9ee" /><path d="M14 5l3 3M22 3l3 5M30 4l-3 5M35 5l-2 4" stroke="#49536b" strokeWidth="2" /><path d="M5 8q19 8 38 0l-5 36q-14 6-28 0z" fill="url(#trash)" opacity=".95" /><path d="M12 14l3 26M24 16v26M36 14l-3 26" stroke="#d0d0d0" strokeWidth="2" /></S>,
];

function Dock() {
  const running = [0, 4, 6, 24, 25, 27];
  return (
    <div className="flex h-[72px] justify-center overflow-hidden border-t-2 border-black bg-[linear-gradient(90deg,#3a2f38,#2e262d_50%,#3a2e38)]">
      <div className="flex h-[70px] w-[1824px] rounded-t-[5px] bg-[linear-gradient(180deg,rgba(125,110,122,.45),rgba(140,110,120,.1)),linear-gradient(90deg,#7d6b76,#957579_16%,#8f7076_25%,#8b6f78_31%,#a57a78_36%,#94707c_42%,#a5787c_51%,#8f7080_60%,#8e7486_72%,#9f7678_78%,#80697a_88%,#6d5b6a)] pl-[4.500px]">
        <Defs />
        {DOCK.map((d, i) => (
          <div key={i} className="flex w-[57.750px] shrink-0 flex-col items-center pt-[8px]">
            {d}
            {running.includes(i) && <i className="mt-[6px] size-[4px] rounded-full bg-[#1b1012]" />}
            {i === 1 && <i className="mt-[6px] h-[4px] w-[54px] rounded-[1px] border border-[#1b1012]" />}
          </div>
        ))}
        <div className="mt-[9px] ml-[13px] h-[52px] w-px shrink-0 bg-[#4d3f49]" />
        {DOCK_END.map((d, i) => <div key={i} className={i === 0 ? "ml-[11px] flex w-[58px] shrink-0 justify-center pt-[8px]" : "flex w-[58px] shrink-0 justify-center pt-[8px]"}>{d}</div>)}
      </div>
    </div>
  );
}

export default function App() {
  return (
    <div className="h-[1080px] w-[1920px] overflow-hidden bg-[#2e262d]">
      <MenuBar />
      <div className="font-[Roboto,'Noto_Sans_CJK_SC',sans-serif]">
        <TabStrip />
        <Toolbar />
        <Bookmarks />
      </div>
      <Kibana />
      <Dock />
    </div>
  );
}
